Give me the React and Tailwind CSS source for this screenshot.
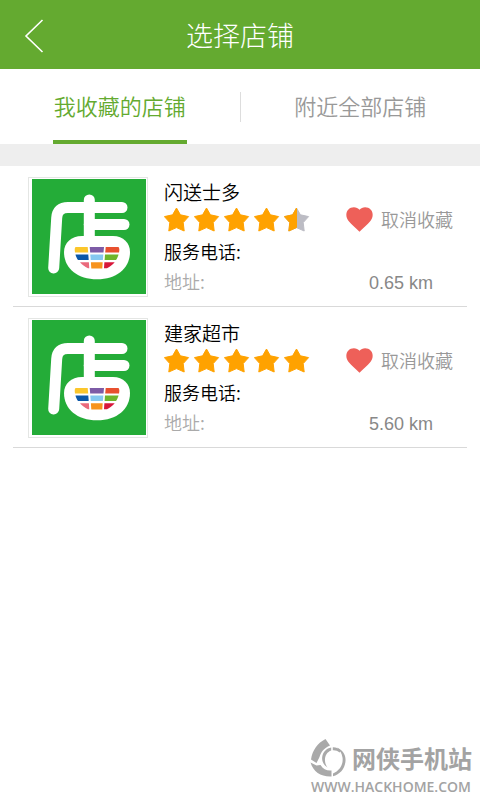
import React from 'react';

const stores = [
    { id: 1, name: '闪送士多', rating: 4.5, distance: '0.65 km' },
    { id: 2, name: '建家超市', rating: 5, distance: '5.60 km' },
];

const STAR = 'M12.5 1 L16.4 7.8 L24.6 9.6 L19.2 15.6 L20.2 24 L12.5 20.6 L4.8 24 L5.8 15.6 L0.4 9.6 L8.6 7.8 Z';
const HALF_STAR = 'M12.5 1 L8.6 7.8 L0.4 9.6 L5.8 15.6 L4.8 24 L12.5 20.6 Z';

const Star = ({ half }) => (
    <svg viewBox="0 0 26 25" className="w-[26px] h-[25px]" strokeWidth="1" strokeLinejoin="round">
        <path d={STAR} fill={half ? '#bcbcc4' : '#ffa200'} stroke={half ? '#bcbcc4' : '#ffa200'} />
        {half && <path d={HALF_STAR} fill="#ffa200" stroke="#ffa200" />}
    </svg>
);

const Rating = ({ value }) => (
    <div className="flex gap-1 h-[25px]" role="img" aria-label={`${value}`}>
        {[1, 2, 3, 4, 5].map((n) => (
            <Star key={n} half={n > value} />
        ))}
    </div>
);

const Heart = () => (
    <svg viewBox="0 0 27 25" className="w-[27px] h-[25px]">
        <path d="M13.5 24.8 C10.5 21.4 5.4 17.4 2.6 14 C-0.2 10.6 -0.5 5.6 2.2 2.7 C5.4 -0.7 11 -0.3 13.5 2.8 C16 -0.3 21.6 -0.7 24.8 2.7 C27.5 5.6 27.2 10.6 24.4 14 C21.6 17.4 16.5 21.4 13.5 24.8 Z" fill="#ee6059" />
    </svg>
);

const StoreLogo = () => (
    <svg viewBox="0 0 120 120" className="w-[120px] h-[120px] shrink-0">
        <rect x="0.5" y="0.5" width="119" height="119" fill="#fff" stroke="#e4e6e4" />
        <rect x="4" y="2" width="114" height="115" fill="#24ac38" />
        <g fill="none" stroke="#fff" strokeWidth="11" strokeLinecap="round">
            <path d="M61.3 23 V64" />
            <path d="M94 30.5 H40 Q29.3 30.5 28.7 41 L25.7 91" />
            <path d="M61.3 47.5 H96" />
        </g>
        <path d="M54 59 H85 C95.5 59 102 66 102 75 C102 91 89 102.3 69 102.3 C49 102.3 36 91 36 75 C36 66 43 59 54 59 Z" fill="#fff" />
        <path d="M47.5 70 H59.7 L60.2 75.5 H47 C46.6 73 46.5 71 47.5 70 Z" fill="#fbc62b" />
        <path d="M61.7 70 H76 L75.5 75.5 H62.2 Z" fill="#7d5ba6" />
        <path d="M77.7 70 H90.5 C91.5 71 91.5 73 91 75.5 H77.2 Z" fill="#e8502f" />
        <path d="M47.5 77.5 H60.3 L60.7 83 H50 C48.7 81.2 48 79.5 47.5 77.5 Z" fill="#0b57a8" />
        <path d="M62.3 77.5 H75.3 L74.9 83 H62.7 Z" fill="#84c8f0" />
        <path d="M77 77.5 H90.5 C90 79.5 89.3 81.2 88 83 H76.6 Z" fill="#6fb52c" />
        <path d="M52 85.3 H60.9 L61.3 91.3 H60 C56.7 89.7 54 87.7 52 85.3 Z" fill="#ea6a7c" />
        <path d="M62.9 85.3 H74.7 L74.3 91.5 H63.3 Z" fill="#f7931d" />
        <path d="M76.4 85.3 H86.7 C84.7 87.7 82 89.7 79 91.3 H76 Z" fill="#d8173a" />
    </svg>
);

const Tab = ({ label, active }) => (
    <div className="flex-1 flex justify-center">
        <button
            type="button"
            role="tab"
            aria-selected={!!active}
            className={`h-full px-px pt-0.5 border-b-4 text-[22px] font-[350] ${active ? 'border-[#64aa30] text-[#64aa30]' : 'border-transparent text-[#999999]'}`}
        >
            {label}
        </button>
    </div>
);

const StoreItem = ({ store }) => (
    <li className="mx-[13px] pl-[15px] pt-[11px] pb-[9px] pr-3.5 flex border-b border-[#d9d9d9]">
        <StoreLogo />
        <div className="flex-1 ml-4 flex flex-col">
            <h2 className="h-[30px] leading-[30px] text-[19px] font-[350] text-black">{store.name}</h2>
            <div className="flex items-center justify-between">
                <Rating value={store.rating} />
                <button type="button" className="flex items-center gap-2 leading-[25px] text-[18px] font-[350] text-[#999999]">
                    <Heart />
                    取消收藏
                </button>
            </div>
            <p className="mt-1 h-[30px] leading-[30px] text-[18px] font-[350] text-black">服务电话:</p>
            <div className="h-[30px] leading-[30px] text-[18px] flex justify-between">
                <span className="font-[350] text-[#aaaaaa]">地址:</span>
                <span className="mr-5 pt-0.5 font-['Liberation_Sans'] text-[#888888]">{store.distance}</span>
            </div>
        </div>
    </li>
);

const Watermark = () => (
    <footer className="mt-auto pb-[3px] pr-2 self-end flex flex-col items-center text-[#a3a3a3]">
        <div className="flex items-center gap-1.5">
            <svg viewBox="0 0 36 38" className="w-9 h-[38px]" fill="#a9a9a9">
                <path d="M15.5 0 L20 6.5 C14 9 11 13 9.5 18 L6.5 24 L1 20.500 C2.500 11 7.500 4 15.500 0 Z" />
                <path d="M0.5 23.5 L6.500 26.500 L10.500 26 C13 30 17 32 21.5 31.5 L21.5 37.5 C11 38 3.500 33 0.5 23.500 Z" />
                <path d="M23 34.500 C30 31.500 33.500 25 32.500 18.500 C31.800 14 29.500 10.500 26.500 8.500 C32.500 10.500 36 16 35.500 22 C35 29.500 30 35.500 23 37.300 Z" />
                <path d="M21.200 8.500 V11.500 C17 13 14.500 17 15 22 C15.200 24.500 16 26.500 17.500 28.500 C13.500 26 11.700 22 12.200 18 C12.800 13 16.500 9.300 21.200 8.500 Z" />
                <path d="M22.800 8.300 C26 8.200 29 9.500 31 12 L29.500 13.500 C27.500 11.700 25.200 11 22.800 11.200 Z" />
            </svg>
            <span className="text-[24px] leading-[38px] font-bold">网侠手机站</span>
        </div>
        <span className="font-['Open_Sans'] font-semibold text-[14px] leading-5">WWW.HACKHOME.COM</span>
    </footer>
);

export default function App() {
    return (
        <div className="min-h-screen flex flex-col bg-white font-['Noto_Sans_CJK_SC',sans-serif]">
            <header className="relative h-[69px] flex items-center justify-center bg-[#64aa30] text-white">
                <button type="button" aria-label="返回" className="absolute left-6 top-[18px]">
                    <svg viewBox="0 0 20 36" className="w-5 h-9" fill="none" stroke="#fff" strokeWidth="1.6">
                        <path d="M18.5 2 L2 18 L18.5 34" />
                    </svg>
                </button>
                <h1 className="pt-0.5 text-[27px] font-light">选择店铺</h1>
            </header>

            <div role="tablist" className="h-[75px] flex items-stretch">
                <Tab label="我收藏的店铺" active />
                <div className="w-px h-[30px] mt-[23px] bg-[#dddddd]" />
                <Tab label="附近全部店铺" />
            </div>

            <div className="h-[22px] bg-[#eeeeee]" />

            <ul>
                {stores.map((store) => (
                    <StoreItem key={store.id} store={store} />
                ))}
            </ul>

            <Watermark />
        </div>
    );
}
